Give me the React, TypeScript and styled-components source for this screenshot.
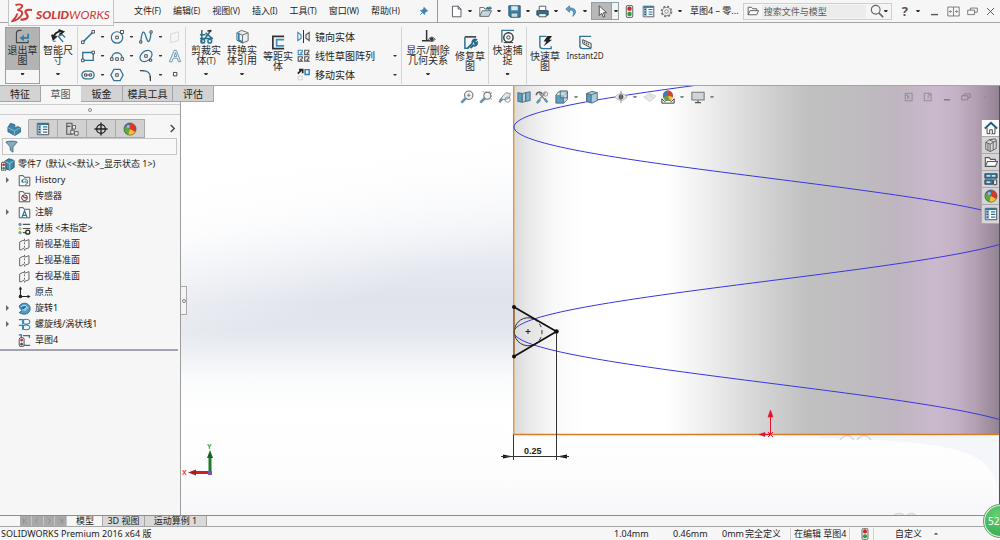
import React from "react";
import styled, { createGlobalStyle, css } from "styled-components";

const GlobalStyle = createGlobalStyle`
  *, *::before, *::after { box-sizing: border-box; }
  html, body { margin: 0; padding: 0; }
  body {
    font-family: "Noto Sans", "Noto Sans CJK SC", sans-serif;
    font-size: 9px;
    line-height: 12px;
    color: #222;
    background: #f6f6f6;
  }
  button, input {
    font: inherit;
    color: inherit;
    margin: 0;
    padding: 0;
    border: 0;
    background: none;
    outline: none;
  }
`;

/* ---------- icons ---------- */

const B = "#2f7595";
const D = "#3a3f45";

const icons: Record<string, React.ReactNode> = {
  pin: <g fill="#3f83b5" stroke="#3f83b5"><path d="M8 2l6 6-2 .5-3 3 0 2.500-7-7 2.500 0 3-3z" /><path d="M5.500 10.500L2 14" strokeWidth="1.500" /></g>,
  file: <path d="M3 1.500h7l3.500 3.500v9.500H3zM10 1.500V5h3.500" fill="#fff" stroke={D} />,
  open: <g><path d="M1 14V3h5l1 2h5v2" fill="#fff" stroke="#555" /><path d="M1 14l3-7h11.500L12 14z" fill="#c4d8e4" stroke="#555" /><path d="M8 5c1-3 3-3 5-2l0-2 3 3-3 2.500V5" fill={B} /></g>,
  save: <g><path d="M1 1h14v14H3l-2-2z" fill="#3d81a6" stroke="#245" /><path d="M4 1.500h8v5H4z" fill="#d9e9f2" /><path d="M4 10h8v5H4z" fill="#cdd" stroke="#245" strokeWidth=".6" /></g>,
  print: <g><path d="M4 1.500h8V7H4z" fill="#fff" stroke={D} /><path d="M1 7h14v5.500H1z" fill={B} stroke="#245" /><path d="M3.500 10.500h9v4h-9z" fill="#eee" stroke={D} /></g>,
  undo: <path d="M5.500 1L1 5l4.500 4V6.500C10 6 11.500 8 9.500 14 15 10 14.500 3.500 5.500 3.500z" fill="#5ea2c8" stroke={B} strokeWidth=".8" />,
  cursor: <path d="M4 1v12l3-3 2 5 2-1-2-4.500h4z" fill="#fff" stroke="#333" />,
  light: <g><rect x="4" y=".5" width="8" height="15" rx="2" fill="#e9e9e2" stroke="#444" /><circle cx="8" cy="4.500" r="2.700" fill="#d32424" /><circle cx="8" cy="11" r="2.700" fill="#2f9a48" /></g>,
  list: <g><path d="M1.500 1.500h13v13h-13z" fill="#fff" stroke={D} /><path d="M2 2h4v12H2z" fill="#9dc4d8" /><path d="M2 2.500h12" stroke={B} strokeWidth="2" /><path d="M8 5.500h5M8 8.500h5M8 11.500h5" stroke={B} strokeWidth="1.300" /><path d="M3 5.500h2M3 8.500h2M3 11.500h2" stroke="#246" strokeWidth="1.500" /></g>,
  gear: <g fill="none" stroke="#777"><circle cx="8" cy="8" r="6" strokeWidth="2.400" strokeDasharray="2.600 2.100" /><circle cx="8" cy="8" r="5" fill="#f6f6f6" /><circle cx="8" cy="8" r="2.200" /></g>,
  folder: <path d="M1.500 13V3h4.500l1.500 2H13v2.500M1.500 13L4 7.500h11.500L13 13z" fill="#fafafa" stroke="#555" strokeWidth="1.200" />,
  search: <g fill="none" stroke="#666"><circle cx="6.500" cy="6.500" r="5" strokeWidth="1.300" /><path d="M10 10l5 5" strokeWidth="2" /></g>,
  min: <path d="M3 12.500h10" stroke="#555" strokeWidth="2" />,
  split: <path d="M1 2.500h14v11H1zM8 2.500v11M3 8h3M10 8h3M4.500 6.500L3 8l1.500 1.500M11.500 6.500L13 8l-1.500 1.500" fill="none" stroke="#666" />,
  restore: <path d="M5 6V3h10v6h-4M1 6h10v6.500H1z" fill="none" stroke="#666" strokeWidth="1.200" />,
  close: <path d="M3 3l10 10M13 3L3 13" stroke="#555" strokeWidth="1.400" />,
  dot: <circle cx="8" cy="8" r="1.200" fill="#857b87" />,
  dockL: <path d="M2 2h11v12H2zM2 5h4v6M9 6L6.500 8.500 9 11" fill="none" stroke="#6f6571" strokeWidth="1.200" />,
  dockR: <path d="M2 2h11v12H2zM9 2v3h4M7 6l2.500 2.500L7 11" fill="none" stroke="#6f6571" strokeWidth="1.200" />,
  exit: <g fill="none"><path d="M7 1.500H4.500a3 3 0 0 0-3 3V14.500H14V12" stroke="#444" strokeWidth="1.200" /><path d="M14 5v4.500H8" stroke="#2b7fb0" strokeWidth="2" /><path d="M9.500 6L5 9.500 9.500 13z" fill="#2b7fb0" /></g>,
  dimension: <g fill="none"><path d="M2.500 9A9 9 0 0 1 10 2.500M8 1l5 2-4 3M1 6l1.500 5L6 7.500" stroke="#222" strokeWidth="2" /><path d="M7 8l5-2 3 3M8 8l5 6" stroke={B} strokeWidth="1.400" /><path d="M2 13h3" stroke={B} /></g>,
  line: <g><path d="M2 14L14 2" stroke="#1d6f9b" strokeWidth="1.600" /><path d="M.5 12.500h3v3h-3zM12.500.5h3v3h-3z" fill="#fff" stroke={D} /></g>,
  circle: <g fill="none"><circle cx="8" cy="8.500" r="6.500" stroke={B} strokeWidth="1.400" /><path d="M6.500 7h3v3h-3zM12 .5h3.500V4H12z" fill="#fff" stroke={D} /></g>,
  spline: <g fill="none"><path d="M2 14C3 2 5 0 7 5s3 11 5 7 1-8 2-10" stroke={B} strokeWidth="1.500" /><path d="M.8 12.500h2.500V15H.8zM12.500 1H15v2.500h-2.500z" fill="#fff" stroke={D} /></g>,
  plane: <path d="M3 4.500L12 2v10L3 14.500z" fill="#f5f5f5" stroke="#d5d5d5" />,
  rect: <g><path d="M2 4h12v9H2z" fill="none" stroke={B} strokeWidth="1.500" /><path d="M.5 11.500h3v3h-3zM12.500 2.500h3v3h-3z" fill="#fff" stroke={D} /></g>,
  arc: <g><path d="M2 11C2 2 14 2 14 11" fill="none" stroke={B} strokeWidth="1.500" /><path d="M.5 10h3v3h-3zM12.500 10h3v3h-3zM6.500 10h3v3h-3z" fill="#fff" stroke={D} /></g>,
  ellipse: <g fill="none"><ellipse cx="8" cy="8" rx="7.500" ry="5.500" transform="rotate(-38 8 8)" stroke={B} strokeWidth="1.400" /><path d="M6.500 6.500h3v3h-3zM12 11.500h2.500V14H12z" stroke={D} /></g>,
  text: <path d="M1.500 14.500L7 1.500h2.500L14.500 14.500H12L10.500 10.500H6L4.500 14.500zM7 8.500h3L8.500 4z" fill="#eef5fa" stroke="#5b8eac" />,
  slot: <g fill="none"><rect x="1" y="3.500" width="14" height="9" rx="4.500" stroke={B} strokeWidth="1.500" /><path d="M4 6.700h2.600v2.600H4zM9.500 6.700h2.600v2.600H9.500zM6.600 8h3" stroke={D} /></g>,
  hexagon: <g fill="none"><path d="M4.500 1.500h7L15 8l-3.500 6.500h-7L1 8z" stroke={B} strokeWidth="1.500" /><path d="M6.500 6.500h3v3h-3z" stroke={D} /></g>,
  fillet: <g fill="none"><path d="M1 3h5" stroke={D} strokeWidth="1.500" /><path d="M4 3c6 0 9 2 9 8" stroke={B} strokeWidth="1.600" /><path d="M13 9v6" stroke={D} strokeWidth="1.500" /></g>,
  point: <path d="M5 5h5v5H5z" fill="#fff" stroke={D} strokeWidth="1.400" />,
  trim: <g fill="none" stroke={B} strokeWidth="1.600"><path d="M3 1v14M1 10h14M1 6h6M13 1L5 12M7 4l7 6" stroke="#2a6c84" /><circle cx="11.500" cy="13" r="2" /><circle cx="4" cy="13" r="2" /><path d="M9 2h4" stroke="#222" /></g>,
  convert: <g fill="#e8eef2" stroke="#666"><path d="M2 4l5-2.500L14 4v8.500L8 15 2 12z" /><path d="M2 4l6 2.500L14 4M8 6.500V15" /><path d="M4 4v8l4 2" stroke="#2b7fb0" strokeWidth="1.800" fill="none" /></g>,
  offset: <g fill="none"><path d="M14 1.500H2v13h12" stroke="#333" strokeWidth="1.800" /><path d="M14 5H6v6.500h8" stroke="#3b8dbe" strokeWidth="1.800" /></g>,
  mirror: <g fill="none"><path d="M8 0v16" stroke="#333" strokeWidth="1.300" /><path d="M1 3l4 3v4l-4 3z" stroke="#3b8dbe" strokeWidth="1.400" /><path d="M15 3l-4 3v4l4 3z" stroke="#555" strokeWidth="1.400" /></g>,
  pattern: <g fill="none" strokeWidth="1.400"><path d="M1.500 1.500h5v2l-2 1.500 2 2h-5z" stroke="#3b8dbe" /><path d="M9.500 1.500h5v2l-2 1.500 2 2h-5zM1.500 9.500h5v2l-2 1.500 2 2h-5zM9.500 9.500h5v2l-2 1.500 2 2h-5z" stroke="#555" /></g>,
  move: <g fill="none"><path d="M1 7l5-5M2.500 2H7v4.500" stroke="#222" strokeWidth="2" /><path d="M10 2h5v6h-5z" stroke="#2b7fb0" strokeWidth="1.800" /><path d="M1.500 10h5v4.500h-5z" stroke="#ccc" /></g>,
  relations: <g fill="none" stroke="#333"><path d="M6 1v11M1 12.500h9" strokeWidth="1.600" /><path d="M8 11c2-3 5-3 7 0-2 3-5 3-7 0z" fill="#eee" /><circle cx="11.500" cy="11" r="1.500" fill="#333" /></g>,
  repair: <g fill="none"><path d="M14 2H2" stroke="#333" strokeWidth="1.600" /><path d="M2 2v12h4" stroke={B} strokeWidth="1.600" /><path d="M5 14l5-5M10 9c-1-3 2-5 4-4l-2 2 1 2 2-1c0 3-2 4-4 3l-3 3" stroke="#26678a" strokeWidth="2" /></g>,
  snap: <g fill="none"><path d="M15 1.500H2V14.500" stroke={B} strokeWidth="1.400" /><circle cx="9" cy="9" r="5" stroke="#333" strokeWidth="1.500" /><circle cx="9" cy="9" r="1.800" stroke="#333" /><path d="M4 14.500h10" stroke="#333" /></g>,
  rapid: <g fill="none"><path d="M9 1.500H2v10q0 3 3 3h9V12" stroke={B} strokeWidth="1.500" /><path d="M10 1h5l-3 4h3L6 12l3-5H6z" fill="#222" /></g>,
  instant: <g fill="none"><path d="M14 1.500H2v10q0 3 3 3h9" stroke={B} strokeWidth="1.500" /><path d="M5 5l9 4v5L5 9z" fill="#dce9f1" stroke="#444" /><path d="M7 7v2M9 8v2M11 9v2" stroke="#444" /></g>,
  part: <g stroke="#1c5674" strokeWidth=".8"><path d="M1 6l3-4.500 5 1.500v4l3-2 3.500 1.500v5L9 15.500 1 11z" fill="#3f86ab" /><path d="M1 6.500L8.500 10l7-3.500M8.500 10v5" fill="none" stroke="#9fcae0" /></g>,
  config: <g fill="none" stroke="#555"><path d="M2 1.500h6v12.500H2zM2 5h4" strokeWidth="1.200" /><path d="M8.500 4h3.500v4H8.500zM6.500 9.500h4v4h-4zM11 11h4v4h-4z" fill="#eee" /></g>,
  target: <g fill="none" stroke="#222" strokeWidth="1.500"><circle cx="8" cy="8" r="5" /><path d="M8 .5v15M.5 8h15" /></g>,
  ball: <g><circle cx="8" cy="8" r="7" fill="#d8392b" /><path d="M8 8L2 4.500A7 7 0 0 1 8 1z" fill="#3573b8" /><path d="M8 8L2 4.500A7 7 0 0 0 6 14.700z" fill="#58aa45" /><path d="M8 8L6 14.700A7 7 0 0 0 14 11.500z" fill="#efc62c" /><circle cx="8" cy="8" r="7" fill="none" stroke="#444" strokeWidth=".6" /><circle cx="6" cy="5" r="1.800" fill="#fff" opacity=".5" /></g>,
  funnel: <path d="M1 2.500c3-1.500 11-1.500 14 0L9.800 8.500V15L6.500 12.500v-4z" fill="#85abbd" stroke="#3f6272" />,
  partLit: <g><g transform="translate(2 0)"><path d="M2 5l5-3 6 2v8l-5 3-6-2z" fill="#3f86ab" stroke="#1c5674" /><path d="M2 5l6 2.500 5-3.500M8 7.500V15" fill="none" stroke="#a5cee2" /></g><rect x=".5" y="6" width="5" height="10" rx="1.500" fill="#eee" stroke="#333" /><circle cx="3" cy="8.800" r="1.500" fill="#c22" /><circle cx="3" cy="13" r="1.500" fill="#384" /></g>,
  history: <g fill="none"><path d="M1.500 14.500V2h5l1 2h7v10.500z" fill="#fafafa" stroke="#555" strokeWidth="1.200" /><path d="M5 10a3.500 3.500 0 1 1 4 3M5 7v3h3M9 8v2h2" stroke={B} strokeWidth="1.200" /></g>,
  sensor: <g fill="none"><path d="M1.500 14.500V2h5l1 2h7v10.500z" fill="#fafafa" stroke="#555" strokeWidth="1.200" /><circle cx="8" cy="9.500" r="3.500" stroke="#333" strokeWidth="1.200" /><path d="M8 9.500l-2-2M8 9.500h3" stroke="#c33" strokeWidth="1.700" /></g>,
  note: <g fill="none"><path d="M1.500 14.500V2h5l1 2h7v10.500z" fill="#fafafa" stroke="#555" strokeWidth="1.200" /><path d="M5 13.500L8 6l3 7.500M6 11.500h4" stroke={B} strokeWidth="1.500" /></g>,
  material: <g><path d="M6 3h9M6 8h9M6 13h4" stroke="#555" strokeWidth="1.400" /><circle cx="2.500" cy="3" r="2" fill="#5a9aba" /><circle cx="2.500" cy="8" r="2" fill="#d8c54d" /><circle cx="2.500" cy="13" r="2" fill="#77aa77" /><circle cx="12" cy="12.500" r="2.500" fill="none" stroke="#222" strokeWidth="1.500" /></g>,
  datum: <path d="M8 3H6L2 5v9.500h2L8 12M8 4l5.500-2v10L8 14M8 1v2M8 5.500v2M8 9.500v2M8 14v1.500" fill="none" stroke="#555" strokeWidth="1.100" />,
  origin: <g fill="none" stroke="#222" strokeWidth="1.300"><path d="M3 2v11h11" /><path d="M1.500 4L3 1l1.500 3zM12 11.500l3 1.500-3 1.500z" fill="#222" strokeWidth=".6" /><circle cx="3" cy="13" r="1.500" fill="#222" /></g>,
  revolve: <g><path d="M1.500 5C5-1 15 1 15 8S7 17 1.500 13L5 10.500C3 9 2 7 1.500 5z" fill="#4f9cc6" stroke="#1f5f83" /><path d="M4 6c3-3 8-2 6 1s-4 3-5 2.500" fill="#2b7399" stroke="#fff" /><path d="M8 11l5-5" stroke="#d6ebf6" /></g>,
  helix: <g fill="none" stroke="#2f86b4" strokeWidth="1.400"><path d="M1 2h5c2 1.500 1 5-1 5.500M1 9h5c1.500 1.500 1 5-1 5.500" /><ellipse cx="10" cy="4.500" rx="4.500" ry="3" /><ellipse cx="10" cy="11.500" rx="4.500" ry="3" /></g>,
  sketchLit: <g fill="none"><path d="M1 1h4M4 1v4M6 2h9M14 2v3M7 14h8" stroke={B} strokeWidth="1.500" /><rect x="1.500" y="4.500" width="6" height="11" rx="2" fill="#eee" stroke="#333" /><circle cx="4.500" cy="7.500" r="1.700" fill="#c22" /><circle cx="4.500" cy="12.500" r="1.700" fill="#555" /></g>,
  zoomFit: <g fill="none"><circle cx="10" cy="6" r="4.800" fill="#f0f3f5" stroke="#777" strokeWidth="1.300" /><path d="M8 6h4M10 4v4" stroke="#777" /><path d="M6.500 9.500L1.500 14.500" stroke="#5f93b1" strokeWidth="3" /></g>,
  zoomArea: <g fill="none"><path d="M4 2h10v9" stroke="#999" strokeDasharray="2 1.500" /><circle cx="9.500" cy="6.500" r="4" fill="#f0f3f5" stroke="#777" strokeWidth="1.200" /><path d="M6.500 9.500L1.500 14.500" stroke="#5f93b1" strokeWidth="3" /></g>,
  prev: <g fill="none"><path d="M2 11l7-8 5 1-1 5-5 2z" fill="#dfe8ed" stroke="#888" /><path d="M5 10L1.500 14" stroke="#5f93b1" strokeWidth="2.600" /><circle cx="11" cy="11" r="3" stroke="#888" /></g>,
  section: <g stroke="#4b6370"><path d="M1 3l5 1v10l-5-1z" fill="#5d9fc3" /><path d="M6 4l4-1v10l-4 1z" fill="#b7d2e0" /><path d="M10 3l5-1v10l-5 1z" fill="#7ab2d0" /></g>,
  tools: <g fill="none"><path d="M3 13L12 3M5 4l9 10" stroke="#888" strokeWidth="1.500" /><path d="M1.500 6c0-4 5-5 7-1" stroke="#666" strokeWidth="1.800" /><path d="M6 11l-4 4M11 10l3 4" stroke="#5f93b1" strokeWidth="2.600" /><circle cx="12" cy="4.500" r="2.500" stroke="#888" /></g>,
  orient: <g stroke="#4b6370"><path d="M1 6h9v9H1z" fill="#5d9fc3" /><path d="M1 6l3-4h10l-3 4M14 2v9l-4 4" fill="#d5e3ea" /><path d="M6 1h8v8H6z" fill="#b7d2e0" fillOpacity=".6" /></g>,
  cube: <g stroke="#4b6370"><path d="M2 4l6-2.500L14 3v9l-6 3-6-2z" fill="#a8cde0" /><path d="M2 4l5 1.500v9L2 13z" fill="#5d9fc3" /><path d="M7 5.500L14 3" /></g>,
  eye: <g fill="none"><path d="M1 8c4-5 10-5 14 0-4 5-10 5-14 0z" fill="#e5e5e8" stroke="#aaa" /><circle cx="8" cy="8" r="2.800" fill="#555" /><path d="M8 1v14" stroke="#888" /></g>,
  faint: <path d="M1 8l7-4 7 3-7 6zM1 8l7 5M5 4l8 6" fill="#e6e6e6" stroke="#d2d2d2" />,
  scene: <g><path d="M1 15V10l3 3 4-2 4 2 3-3v5z" fill="#fff" stroke="#222" /><circle cx="8" cy="6.500" r="5.800" fill="#d5422f" /><path d="M8 6.500V.7A5.800 5.800 0 0 0 2.400 8z" fill="#3a7fba" /><path d="M8 6.500L2.400 8A5.800 5.800 0 0 0 10 12z" fill="#57a84a" /><path d="M8 6.500l2 5.500a5.800 5.800 0 0 0 3.700-4z" fill="#eec73a" /></g>,
  monitor: <g><path d="M1 2.500h14v9H1z" fill="#d0d5da" stroke="#777" strokeWidth="1.200" /><path d="M8 12v2M4.500 14.500h7" stroke="#555" strokeWidth="1.500" /></g>,
  home: <g><path d="M3.500 7.500v7h9v-7" fill="#fff" stroke="#333" /><path d="M6.500 14.500V10h3v4.500" fill="#fff" stroke="#333" /><path d="M1 8.500L8 2l7 6.500" fill="none" stroke="#215b7c" strokeWidth="2.200" /></g>,
  library: <g fill="#d6dadd" stroke="#555"><path d="M2 5l4-3 7-1 1 2v9l-7 3.500-5-2.500z" /><path d="M2 5l5 2v8M7 7l7-4M4.500 6v8M10.500 5v8.500M6 2l5 2.500" fill="none" /></g>,
  palette: <g><path d="M1 2h14v5H1zM1 9h9v5H1z" fill="#3d7fa3" stroke="#223f50" /><path d="M3 4.500h4M9 4.500h4M3 11.500h4" stroke="#fff" strokeWidth="1.500" /><path d="M11 9h3.500v5.500H11z" fill="#eee" stroke="#333" /></g>,
};

const Svg = styled.svg<{ $s: number }>`
  display: block;
  flex: none;
  width: ${(p) => p.$s}px;
  height: ${(p) => p.$s}px;
  fill: none;
`;

const Icon = ({ name, size = 14 }: { name: string; size?: number }) => (
  <Svg $s={size} viewBox="0 0 16 16" aria-hidden="true">{icons[name]}</Svg>
);

const Caret = styled.span<{ $color?: string; $up?: boolean }>`
  flex: none;
  display: block;
  width: 4px;
  height: 2px;
  background: ${(p) => p.$color || "#333"};
  clip-path: ${(p) => (p.$up ? "polygon(50% 0, 100% 100%, 0 100%)" : "polygon(0 0, 100% 0, 75% 100%, 25% 100%)")};
`;

/* ---------- frame ---------- */

const Frame = styled.div`
  display: flex;
  flex-direction: column;
  min-height: 100vh;
`;

const TitleBar = styled.header`
  display: flex;
  align-items: center;
  height: 23px;
  padding-left: 8px;
  border-bottom: 1px solid #a5a5a5;
  white-space: nowrap;
`;

const Logo = styled.div`
  position: relative;
  z-index: 2;
  align-self: flex-start;
  flex: none;
  display: flex;
  align-items: center;
  gap: 3px;
  width: 106px;
  height: 26px;
  padding-left: 2px;
  border: 1px solid #c4c4c4;
  border-top: 0;
  background: #f8f8f8;
  color: #cf3a35;
`;

const Mark = styled.svg`
  flex: none;
  width: 22px;
  height: 20px;
  fill: none;
  stroke: #cf3a35;
`;

const Wordmark = styled.span`
  padding-top: 4px;
  font-family: Lato, sans-serif;
  font-size: 12px;
  font-style: italic;
  b { font-weight: 900; }
`;

const Menu = styled.nav`
  flex: none;
  display: flex;
  align-items: center;
  gap: 12px;
  width: 323px;
  padding-left: 20px;
`;

const MenuItem = styled.button`
  small { font-size: 8px; }
`;

const PinButton = styled.button`
  margin-left: 7px;
`;

const QuickBar = styled.div`
  display: flex;
  align-items: center;
  flex: none;
  height: 22px;
  padding-left: 11px;
  border-left: 1px solid #999;
`;

const QuickItem = styled.button<{ $w: number; $on?: boolean }>`
  flex: none;
  display: flex;
  align-items: center;
  gap: 5px;
  width: ${(p) => p.$w}px;
  height: 18px;
  padding-left: 1px;
  ${(p) => p.$on && css`
    margin: 0 3px 0 3px;
    padding-left: 4px;
    border: 1px solid #8ea0aa;
    background: linear-gradient(90deg, #b8b8b8 19px, #8ea0aa 19px, #8ea0aa 20px, #f3f3f3 20px);
  `}
`;

const DocName = styled.span`
  flex: 1 0 50px;
  padding-left: 7px;
`;

const Search = styled.label`
  flex: none;
  display: flex;
  align-items: center;
  width: 149px;
  height: 17px;
  padding: 0 3px;
  border: 1px solid #cfcfcf;
  background: #f5f5f5;
`;

const SearchInput = styled.input`
  flex: 1;
  min-width: 0;
  height: 13px;
  margin: 0 4px 0 3px;
  padding-left: 2px;
  background: #ececec;
  &::placeholder { color: #5c5c5c; opacity: 1; }
`;

const Window = styled.div`
  flex: none;
  display: flex;
  align-items: center;
  gap: 7px;
  padding: 0 4px 0 10px;
  color: #555;
`;

const HelpButton = styled.button`
  display: flex;
  align-items: center;
  gap: 8px;
  margin-right: 2px;
  font-size: 13px;
  font-weight: 700;
`;

/* ---------- ribbon ---------- */

const Ribbon = styled.section`
  display: flex;
  align-items: stretch;
  height: 63px;
  padding: 4px 0 1px 5px;
  border-bottom: 1px solid #a5a5a5;
  white-space: nowrap;
  font-size: 10px;
  line-height: 10px;
`;

const Divider = styled.span<{ $side?: number }>`
  flex: none;
  width: 1px;
  margin: 0 ${(p) => p.$side || 0}px;
  background: #d4d4d4;
`;

const BigButton = styled.button<{ $w: number; $on?: boolean; $menu?: boolean }>`
  flex: none;
  display: flex;
  flex-direction: column;
  align-items: center;
  width: ${(p) => p.$w}px;
  padding-top: ${(p) => (p.$menu ? 2 : 8)}px;
  color: #2c2c2c;
  ${(p) => p.$on && css`
    margin-right: 1px;
    padding-top: 1px;
    border: 1px solid #93a1a8;
    background: linear-gradient(#b3b3b3 42px, #f6f6f6 42px);
  `}
`;

const BigLabel = styled.span<{ $small?: boolean }>`
  height: 20px;
  margin: 1px 0 8px;
  white-space: pre;
  text-align: center;
  small { font-size: 8px; }
  ${(p) => p.$small && css`font-size: 8px;`}
`;

const SketchGrid = styled.div`
  flex: none;
  display: grid;
  grid-template-columns: 16px 13px 16px 13px 16px 13px 16px;
  grid-auto-rows: 19px;
  place-items: center;
`;

const CommandList = styled.div`
  flex: none;
  display: flex;
  flex-direction: column;
  width: 103px;
  padding-left: 1px;
`;

const Command = styled.button`
  display: flex;
  align-items: center;
  height: 19px;
  padding-right: 2px;
`;

const CommandLabel = styled.span`
  flex: 1;
  padding-left: 5px;
  text-align: left;
`;

/* ---------- workspace ---------- */

const Workspace = styled.main`
  flex: 1;
  display: grid;
  grid-template-columns: 181px minmax(0, 1fr);
`;

const Side = styled.aside`
  display: flex;
  flex-direction: column;
  border-right: 1px solid #9c9c9c;
`;

const RibbonTabs = styled.div`
  position: relative;
  z-index: 2;
  display: flex;
  width: max-content;
  height: 16px;
`;

const RibbonTab = styled.button<{ $w: number; $on?: boolean }>`
  width: ${(p) => p.$w}px;
  border: solid #a5a5a5;
  border-width: 0 1px 1px 0;
  background: #d3d3d3;
  font-size: 10px;
  ${(p) => p.$on && css`
    border-color: transparent;
    background: #f6f6f6;
    color: #555;
  `}
`;

const Splitter = styled.div`
  display: flex;
  align-items: center;
  justify-content: center;
  height: 11px;
  margin-top: 2px;
  border: solid #cdcdcd;
  border-width: 1px 0;
  &::after {
    content: "";
    width: 4px;
    height: 4px;
    border: 1px solid #888;
    border-radius: 50%;
  }
`;

const PanelTabs = styled.div`
  display: flex;
  align-items: stretch;
  height: 19px;
  margin-top: 4px;
  padding-right: 3px;
`;

const PanelTab = styled.button<{ $on?: boolean }>`
  display: grid;
  place-items: center;
  width: 29px;
  border: solid #a9a9a9;
  border-width: 1px 1px 1px 0;
  background: #d1d1d1;
  ${(p) => p.$on && css`
    border-color: transparent #a9a9a9 transparent transparent;
    background: none;
  `}
`;

const MoreButton = styled.button`
  margin-left: auto;
  svg { stroke: #444; stroke-width: 1.500; }
`;

const Filter = styled.label`
  display: flex;
  align-items: center;
  height: 17px;
  margin: 0 3px 1px 2px;
  padding-left: 2px;
  border: 1px solid #c6c6c6;
  background: #f8f8f8;
`;

const FilterInput = styled.input`
  flex: 1;
  min-width: 0;
`;

const Tree = styled.ul`
  margin: 0 2px 0 0;
  padding: 0 0 1px;
  list-style: none;
  border-bottom: 2px solid #a3a3b0;
`;

const Node = styled.li<{ $root?: boolean }>`
  display: flex;
  align-items: center;
  gap: ${(p) => (p.$root ? 3 : 4)}px;
  height: 16px;
  padding-left: ${(p) => (p.$root ? 1 : 5)}px;
  white-space: pre;
  color: #222;
`;

const Twist = styled.span<{ $show?: boolean }>`
  width: 5px;
  height: 6px;
  margin-right: 4px;
  background: ${(p) => (p.$show ? "#666" : "transparent")};
  clip-path: polygon(20% 0, 80% 50%, 20% 100%);
`;

/* ---------- viewport ---------- */

const Viewport = styled.section`
  position: relative;
  overflow: hidden;
  border-right: 1px solid #55505a;
`;

const Scene = styled.svg`
  position: absolute;
  inset: 0;
  width: 100%;
  height: 100%;
`;

const Collapse = styled.button`
  position: absolute;
  left: 0;
  top: 200px;
  display: grid;
  place-items: center;
  width: 6px;
  height: 29px;
  border: 1px solid #aaa;
  border-left: 0;
  background: #f4f4f4;
  &::after {
    content: "";
    width: 4px;
    height: 4px;
    border: 1px solid #888;
    border-radius: 50%;
  }
`;

const HeadsUp = styled.div`
  position: absolute;
  left: 50%;
  top: 4px;
  display: flex;
  transform: translateX(-130px);
`;

const HeadsUpButton = styled.button<{ $w: number }>`
  display: flex;
  align-items: center;
  gap: 5px;
  width: ${(p) => p.$w}px;
  height: 14px;
`;

const DocWindow = styled.div`
  position: absolute;
  right: 9px;
  top: 6px;
  display: flex;
  gap: 9px;
  opacity: .7;
`;

const TaskPane = styled.div`
  position: absolute;
  right: -1px;
  top: 34px;
  display: flex;
  flex-direction: column;
  border-left: 1px solid #aaa;
`;

const TaskTab = styled.button<{ $on?: boolean }>`
  display: grid;
  place-items: center;
  width: 18px;
  height: 17px;
  border-bottom: 1px solid #aaa;
  background: ${(p) => (p.$on ? "#fafafa" : "#d6d4d6")};
  &:last-child { height: 19px; }
`;

/* ---------- footer ---------- */

const SheetBar = styled.div`
  display: flex;
  height: 12px;
  padding-left: 20px;
  border-top: 1px solid #8d8d8d;
  border-bottom: 1px solid #a5a5a5;
`;

const SheetNav = styled.div`
  display: flex;
  width: 47px;
  margin-right: 1px;
  background: #a9a9a9;
`;

const SheetStep = styled.button`
  flex: 1;
  display: grid;
  place-items: center;
  border-right: 1px solid #c5c5c5;
  svg { stroke: #888; }
`;

const Sheet = styled.button<{ $w: number; $on?: boolean }>`
  width: ${(p) => p.$w}px;
  border-right: 1px solid #a5a5a5;
  background: ${(p) => (p.$on ? "#f6f6f6" : "#d9d9d9")};
  line-height: 10px;
  white-space: nowrap;
`;

const Status = styled.footer`
  position: relative;
  display: flex;
  align-items: center;
  height: 13px;
  padding-left: 1px;
  white-space: nowrap;
`;

const Message = styled.span`
  flex: 1;
`;

const Cell = styled.span<{ $w: number; $line?: boolean; $pad?: number }>`
  flex: none;
  display: flex;
  align-items: center;
  gap: 12px;
  width: ${(p) => p.$w}px;
  height: 12px;
  padding-left: ${(p) => p.$pad || 0}px;
  border-left: ${(p) => (p.$line ? "1px solid #d2d2d2" : "0")};
`;

const BadgeCorner = styled.div`
  position: absolute;
  right: 0;
  bottom: 0;
  z-index: 3;
  width: 24px;
  height: 40px;
  overflow: hidden;
`;

const Badge = styled.span`
  position: absolute;
  right: -17px;
  bottom: 2px;
  display: flex;
  align-items: center;
  width: 34px;
  height: 34px;
  padding-left: 3px;
  border: 2px solid #dfeee0;
  border-radius: 50%;
  outline: 1px solid #6d9a70;
  outline-offset: -1px;
  background: radial-gradient(circle at 40% 30%, #62d074, #2da548);
  color: #fff;
  font-size: 10px;
`;

/* ---------- model ---------- */

const helixPoints = () => {
  const pts: string[] = [];
  for (let y = 84; y <= 428; y += 1) {
    const x = 770 - 256 * Math.cos((2 * Math.PI * (y - 127)) / 205);
    pts.push(`${x.toFixed(1)},${y}`);
  }
  return pts.join(" ");
};

const shade: [number, string][] = [
  [0, "#dadada"], [3, "#e9e9e9"], [8, "#f8f8f8"], [14, "#ffffff"], [31, "#ffffff"], [39, "#f0f0f0"],
  [50, "#d6d6d6"], [60, "#c1c1c1"], [71, "#bfbcbf"], [79, "#bfb5c0"], [87, "#cab9cd"],
  [91, "#c3b1c5"], [95, "#b3a0b2"], [100, "#918291"],
];

const sky: [number, string][] = [
  [0, "#ffffff"], [18, "#fcfcfd"], [32, "#f1f3f7"], [42, "#e5e8f0"], [50, "#dfe3ec"],
  [57, "#e3e6ed"], [63, "#f0f2f5"], [68, "#fafbfc"], [76, "#ffffff"], [90, "#fdfdfd"], [100, "#f7f7fa"],
];

const Model = () => (
  <Scene viewBox="181 86 818 429" preserveAspectRatio="xMinYMin slice" role="img" aria-label="零件7">
    <defs>
      <linearGradient id="sky" x1="0" y1="0" x2="0" y2="1">
        {sky.map(([o, c]) => <stop key={o} offset={`${o}%`} stopColor={c} />)}
      </linearGradient>
      <linearGradient id="glow" gradientUnits="userSpaceOnUse" x1="240" y1="160" x2="290" y2="320">
        <stop offset="0" stopColor="#fff" />
        <stop offset=".35" stopColor="#fff" stopOpacity=".8" />
        <stop offset="1" stopColor="#fff" stopOpacity="0" />
      </linearGradient>
      <linearGradient id="shade">
        {shade.map(([o, c]) => <stop key={o} offset={`${o}%`} stopColor={c} />)}
      </linearGradient>
    </defs>
    <rect x="181" y="86" width="819" height="430" fill="url(#sky)" />
    <rect x="181" y="86" width="334" height="300" fill="url(#glow)" />
    <path d="M820 436H1000V515H999C1000 455 985 442 820 438z" fill="#f5f6fa" />
    <rect x="514" y="86" width="486" height="348" fill="url(#shade)" />
    <path d="M840 440q7-9 14 0M857 440q7-9 14 0M893 516q6-5 12 0M906 516q6-5 10 0" fill="none" stroke="#d9d6d6" strokeWidth="1.500" />
    <path d="M514 307L556.500 331.500 514 356z" fill="#ddd" fillOpacity=".35" />
    <rect x="513" y="86" width="1.400" height="349" fill="#e8962f" />
    <path d="M513 434.500H1000" stroke="#dc7a28" strokeWidth="1.300" />
    <polyline points={helixPoints()} fill="none" stroke="#3a36e0" strokeWidth="1" />
    <path d="M534 319A14 14 0 1 0 534 344.500" fill="none" stroke="#333" />
    <path d="M534 319Q542 324 542 332T534 344.500" fill="none" stroke="#333" strokeDasharray="4 3" />
    <path d="M525.500 331.500h5M528 329v5" stroke="#222" />
    <path d="M514 307L556.500 331.500 514 356.500" fill="none" stroke="#111" strokeWidth="1.700" />
    <path d="M514 307V356.500" stroke="#8a5a28" strokeWidth="1.300" />
    <g fill="#111">
      <circle cx="514" cy="307" r="2" /><circle cx="514" cy="356.500" r="2" /><circle cx="556.500" cy="331.500" r="2.200" />
      <path d="M513 456.500l-10-2v4zM557 456.500l10-2v4z" />
    </g>
    <path d="M513.500 435V460M556.500 333V460M501 456.500H569" stroke="#333" strokeWidth="1" fill="none" />
    <text x="524" y="454" fontFamily="'Liberation Sans Narrow', 'Liberation Sans', sans-serif" fontSize="9" fontWeight="700" fill="#222">0.25</text>
    <g stroke="#e0152c" fill="#e0152c">
      <path d="M770.500 416V434M763 434.500h8M768 432l5 5M773 432l-5 5" />
      <path d="M770.500 410l2.500 7h-5zM759 434.500l6-2v4z" strokeWidth=".6" />
    </g>
    <path d="M210 472V457" stroke="#1f7a2e" strokeWidth="3" />
    <path d="M210 450l3 8h-6z" fill="#17632a" />
    <path d="M208 472.500H195" stroke="#c22" strokeWidth="3" />
    <path d="M188 472.500l8-3v6z" fill="#a81e1e" />
    <path d="M208 471h4v4h-4z" fill="#7a55b5" />
    <g fontFamily="'Liberation Sans', sans-serif" fontSize="7" fontWeight="700">
      <text x="207" y="449" fill="#2f9a48">Y</text>
      <text x="182" y="475" fill="#e33">X</text>
    </g>
  </Scene>
);

/* ---------- data ---------- */

const menus = [["文件", "F"], ["编辑", "E"], ["视图", "V"], ["插入", "I"], ["工具", "T"], ["窗口", "W"], ["帮助", "H"]];

const quick: { n: string; w: number; dd?: boolean; on?: boolean }[] = [
  { n: "file", w: 29, dd: true }, { n: "open", w: 29, dd: true }, { n: "save", w: 28, dd: true },
  { n: "print", w: 29, dd: true }, { n: "undo", w: 24, dd: true }, { n: "cursor", w: 28, dd: true, on: true },
  { n: "light", w: 19 }, { n: "list", w: 18 }, { n: "gear", w: 24, dd: true },
];

const sketchTools = [
  ["line", "circle", "spline", "plane"],
  ["rect", "arc", "ellipse", "text"],
  ["slot", "hexagon", "fillet", "point"],
];

const tree: { icon: string; label: string; open?: boolean }[] = [
  { icon: "history", label: "History", open: true },
  { icon: "sensor", label: "传感器" },
  { icon: "note", label: "注解", open: true },
  { icon: "material", label: "材质 <未指定>" },
  { icon: "datum", label: "前视基准面" },
  { icon: "datum", label: "上视基准面" },
  { icon: "datum", label: "右视基准面" },
  { icon: "origin", label: "原点" },
  { icon: "revolve", label: "旋转1", open: true },
  { icon: "helix", label: "螺旋线/涡状线1", open: true },
  { icon: "sketchLit", label: "草图4" },
];

const headsUp: { n: string; w: number; dd?: boolean }[] = [
  { n: "zoomFit", w: 19 }, { n: "zoomArea", w: 19 }, { n: "prev", w: 19 }, { n: "section", w: 18 },
  { n: "tools", w: 20 }, { n: "orient", w: 30, dd: true }, { n: "cube", w: 29 }, { n: "eye", w: 29, dd: true },
  { n: "faint", w: 18 }, { n: "scene", w: 30, dd: true }, { n: "monitor", w: 24, dd: true },
];

const Big = ({ icon, label, w = 36, menu, on, small }: {
  icon: string; label: React.ReactNode; w?: number; menu?: boolean; on?: boolean; small?: boolean;
}) => (
  <BigButton $w={w} $menu={menu} $on={on}>
    <Icon name={icon} size={15} />
    <BigLabel $small={small}>{label}</BigLabel>
    {menu && <Caret />}
  </BigButton>
);

export default function App() {
  return (
    <Frame>
      <GlobalStyle />
      <TitleBar>
        <Logo>
          <Mark viewBox="0 0 22 20" aria-hidden="true">
            <path d="M4.500 2C10 .5 12.500 2 10.500 4.500 9.500 6 8 6.500 6.500 7c5 .5 6 3 3 6.500-2 2.500-4.500 4-8 4.500 2.500-2.500 4-4.500 5-7.500" strokeWidth="1.900" />
            <path d="M21 7c-6-1-8 1-5.500 4s1 6-6 5.500" strokeWidth="2.200" />
          </Mark>
          <Wordmark><b>SOLID</b>WORKS</Wordmark>
        </Logo>
        <Menu>
          {menus.map(([t, k]) => <MenuItem key={t}>{t}<small>({k})</small></MenuItem>)}
          <PinButton aria-label="固定"><Icon name="pin" size={10} /></PinButton>
        </Menu>
        <QuickBar>
          {quick.map((q) => (
            <QuickItem key={q.n} $w={q.w} $on={q.on} aria-label={q.n}>
              <Icon name={q.n} size={13} />
              {q.dd && <Caret />}
            </QuickItem>
          ))}
        </QuickBar>
        <DocName>草图4 – 零...</DocName>
        <Search>
          <Icon name="folder" size={12} />
          <SearchInput placeholder="搜索文件与模型" aria-label="搜索文件与模型" />
          <Icon name="search" size={14} />
          <Caret />
        </Search>
        <Window>
          <HelpButton aria-label="帮助">?<Caret /></HelpButton>
          {["min", "split", "restore", "close"].map((n) => (
            <button key={n} aria-label={n}><Icon name={n} size={n === "split" ? 13 : 11} /></button>
          ))}
        </Window>
      </TitleBar>

      <Ribbon>
        <Big icon="exit" w={35} on menu label={"退出草\n图"} />
        <Big icon="dimension" w={34} menu label={"智能尺\n寸"} />
        <Divider $side={2} />
        <SketchGrid>
          {sketchTools.map((row) => row.map((n, i) => (
            <React.Fragment key={n}>
              <button aria-label={n}><Icon name={n} size={n === "point" ? 11 : 14} /></button>
              {i < 3 && (n === "hexagon" ? <span /> : <Caret />)}
            </React.Fragment>
          )))}
        </SketchGrid>
        <Divider $side={2} />
        <Big icon="trim" menu label={<>{"剪裁实\n体"}<small>(T)</small></>} />
        <Big icon="convert" menu label={"转换实\n体引用"} />
        <Big icon="offset" label={"等距实\n体"} />
        <CommandList>
          <Command><Icon name="mirror" size={13} /><CommandLabel>镜向实体</CommandLabel></Command>
          <Command><Icon name="pattern" size={13} /><CommandLabel>线性草图阵列</CommandLabel><Caret /></Command>
          <Command><Icon name="move" size={13} /><CommandLabel>移动实体</CommandLabel><Caret /></Command>
        </CommandList>
        <Divider $side={2} />
        <Big icon="relations" w={48} menu label={"显示/删除\n几何关系"} />
        <Big icon="repair" label={"修复草\n图"} />
        <Divider />
        <Big icon="snap" w={37} menu label={"快速捕\n捉"} />
        <Divider />
        <Big icon="rapid" label={"快速草\n图"} />
        <Big icon="instant" w={44} small label="Instant2D" />
      </Ribbon>

      <Workspace>
        <Side>
          <RibbonTabs role="tablist">
            <RibbonTab role="tab" $w={41}>特征</RibbonTab>
            <RibbonTab role="tab" $w={40} $on aria-selected="true">草图</RibbonTab>
            <RibbonTab role="tab" $w={42}>钣金</RibbonTab>
            <RibbonTab role="tab" $w={50}>模具工具</RibbonTab>
            <RibbonTab role="tab" $w={41}>评估</RibbonTab>
          </RibbonTabs>
          <Splitter />
          <PanelTabs>
            {["part", "list", "config", "target", "ball"].map((n, i) => (
              <PanelTab key={n} $on={i === 0} aria-label={n}><Icon name={n} size={14} /></PanelTab>
            ))}
            <MoreButton aria-label="更多">
              <Svg $s={9} viewBox="0 0 10 10"><path d="M3 1l4 4-4 4" /></Svg>
            </MoreButton>
          </PanelTabs>
          <Filter>
            <Icon name="funnel" size={13} />
            <FilterInput aria-label="过滤" />
          </Filter>
          <Tree>
            <Node $root><Icon name="partLit" size={14} />{"零件7  (默认<<默认>_显示状态 1>)"}</Node>
            {tree.map((t) => (
              <Node key={t.label}>
                <Twist $show={t.open} />
                <Icon name={t.icon} size={13} />
                {t.label}
              </Node>
            ))}
          </Tree>
        </Side>

        <Viewport>
          <Model />
          <Collapse aria-label="收起" />
          <HeadsUp>
            {headsUp.map((h) => (
              <HeadsUpButton key={h.n} $w={h.w} aria-label={h.n}>
                <Icon name={h.n} size={14} />
                {h.dd && <Caret $color="#888" />}
              </HeadsUpButton>
            ))}
          </HeadsUp>
          <DocWindow>
            {["dockL", "dockR", "min", "restore", "dot"].map((n) => (
              <button key={n} aria-label={n}><Icon name={n} size={10} /></button>
            ))}
          </DocWindow>
          <TaskPane>
            {["home", "library", "folder", "palette", "ball", "list"].map((n, i) => (
              <TaskTab key={n} $on={i === 0} aria-label={n}><Icon name={n} size={14} /></TaskTab>
            ))}
          </TaskPane>
        </Viewport>
      </Workspace>

      <SheetBar>
        <SheetNav>
          {["M7 2L4 5l3 3M3 2v6", "M6 2L3 5l3 3", "M4 2l3 3-3 3", "M3 2l3 3-3 3M7 2v6"].map((d) => (
            <SheetStep key={d} aria-label="翻页"><Svg $s={8} viewBox="0 0 10 10"><path d={d} /></Svg></SheetStep>
          ))}
        </SheetNav>
        <Sheet $w={35} $on>模型</Sheet>
        <Sheet $w={42}>3D 视图</Sheet>
        <Sheet $w={62}>运动算例 1</Sheet>
      </SheetBar>
      <Status>
        <Message>SOLIDWORKS Premium 2016 x64 版</Message>
        <Cell $w={59}>1.04mm</Cell>
        <Cell $w={49}>0.46mm</Cell>
        <Cell $w={23}>0mm</Cell>
        <Cell $w={45}>完全定义</Cell>
        <Cell $w={59} $line $pad={3}>在编辑 草图4</Cell>
        <Cell $w={24} $line $pad={9}><Icon name="light" size={12} /></Cell>
        <Cell $w={22} $line />
        <Cell $w={105}>自定义<Caret $up /></Cell>
        <BadgeCorner><Badge>52</Badge></BadgeCorner>
      </Status>
    </Frame>
  );
}
